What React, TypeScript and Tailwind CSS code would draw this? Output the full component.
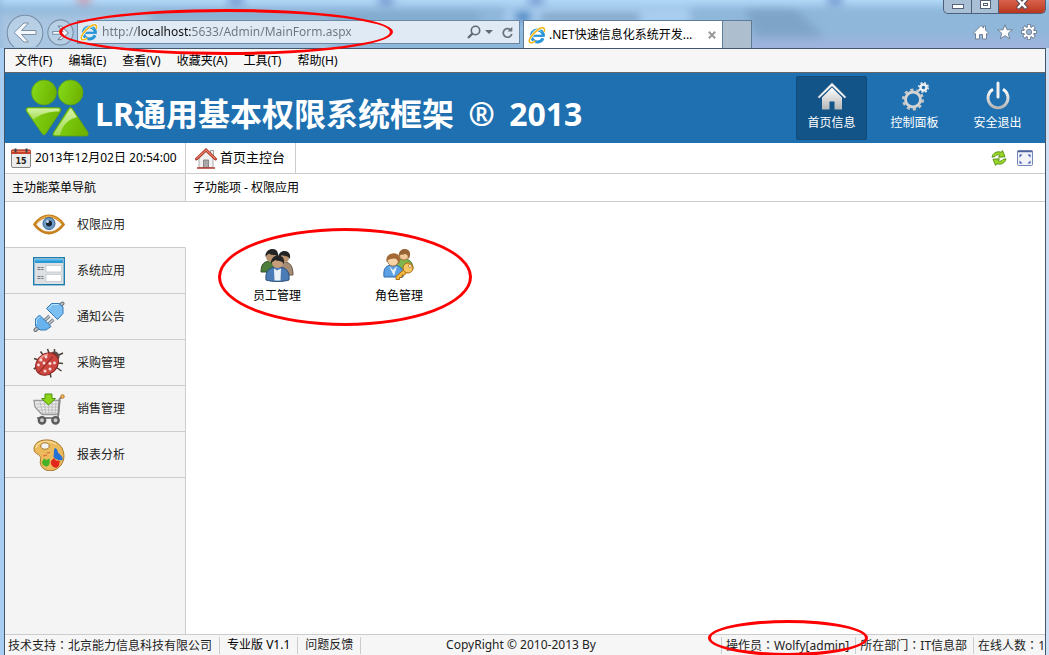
import React, { useState } from "react";

type IconProps = { className?: string };

function IeLogo({ className }: IconProps) {
  return (
    <svg viewBox="0 0 18 18" className={className} aria-hidden="true">
      <path d="M15 12.200A6 6 0 1 1 15.400 9.200" fill="none" stroke="#2795d6" strokeWidth="3" />
      <path d="M5 9.800h11.800" stroke="#2795d6" strokeWidth="2.200" />
      <path d="M4.300 6.500A5.800 5.800 0 0 1 14 6.300" fill="none" stroke="#7fd0f5" strokeWidth="1" />
      <path d="M16.200 5.500C17.500 1.200 14 .5 9.500 4 3.500 8.700-.5 15 2 16.500c1.200.6 3 0 4.800-1.200" fill="none" stroke="#fff" strokeWidth="2.600" />
      <path d="M16.200 5.500C17.500 1.200 14 .5 9.500 4 3.500 8.700-.5 15 2 16.500c1.200.6 3 0 4.800-1.200" fill="none" stroke="#f3b61b" strokeWidth="1.600" strokeLinecap="round" />
    </svg>
  );
}

function BackIcon({ small }: { small?: boolean }) {
  return (
    <svg viewBox="0 0 38 38" className={small ? "h-[27px] w-[27px] rotate-180" : "h-[38px] w-[38px]"} aria-hidden="true">
      <circle cx="19" cy="19" r="17.800" fill="#c4d8eb" fillOpacity="0.55" stroke="#788ea5" strokeWidth={small ? 1.5 : 1.100} />
      <path d="M8 18.500 18 9h4.500l-7 7.500H30v4H15.500l7 7.500H18z" fill="#f4f8fc" stroke="#7d8fa3" strokeWidth={small ? 1.500 : 1} strokeLinejoin="round" />
    </svg>
  );
}

function SearchIcon() {
  return (
    <svg viewBox="0 0 14 14" className="h-[14px] w-[14px]" fill="none" stroke="#5f6973" aria-hidden="true">
      <circle cx="8.500" cy="5.500" r="4.200" strokeWidth="1.600" />
      <path d="M5.400 8.600 1 13" strokeWidth="2.200" />
    </svg>
  );
}

function ReloadIcon() {
  return (
    <svg viewBox="0 0 13 13" className="h-[13px] w-[13px]" aria-hidden="true">
      <path d="M9.300 3.600A4.300 4.300 0 1 0 10.800 7.800" fill="none" stroke="#6a747e" strokeWidth="1.700" />
      <path d="M11.300.8v4.700H6.600z" fill="#6a747e" />
    </svg>
  );
}

function ChromeHome() {
  return (
    <svg viewBox="0 0 16 16" className="h-4 w-4" fill="#fff" stroke="#728296" strokeWidth="1" strokeLinejoin="round" aria-hidden="true">
      <path d="M8 1.500l2.500 2.400V2h2v4L15.500 9l-1 1.200-1-.7v5.500H9.500v-4.500h-3V15h-4V9.500l-1 .7-1-1.200z" />
    </svg>
  );
}

function ChromeStar() {
  return (
    <svg viewBox="0 0 16 16" className="h-4 w-4" fill="#fff" stroke="#728296" strokeWidth="1" strokeLinejoin="round" aria-hidden="true">
      <path d="M8 .8l2 5h5.400l-4.200 3.500 1.600 5.500L8 11.700l-4.800 3.100 1.600-5.500L.6 5.800H6z" />
    </svg>
  );
}

function ChromeGear() {
  return (
    <svg viewBox="0 0 16 16" className="h-4 w-4" aria-hidden="true">
      <g stroke="#728296" strokeWidth="4"><path d="M8 .2v15.600M.2 8h15.600M2.500 2.500l11 11M13.500 2.500l-11 11" /></g>
      <circle cx="8" cy="8" r="5.900" fill="#728296" />
      <g stroke="#fff" strokeWidth="2.200"><path d="M8 1v14M1 8h14M3.100 3.100l9.800 9.800M12.900 3.100l-9.800 9.800" /></g>
      <circle cx="8" cy="8" r="3.700" fill="#9cb4d0" stroke="#fff" strokeWidth="2.200" />
      <circle cx="8" cy="8" r="2.700" fill="#9cb4d0" stroke="#728296" strokeWidth="0.900" />
    </svg>
  );
}

function BrandLogo() {
  return (
    <svg viewBox="0 0 64 58" className="h-[58px] w-16 shrink-0" aria-hidden="true">
      <defs>
        <linearGradient id="leaf" x1="0" y1="0" x2="1" y2="0.3">
          <stop offset="0" stopColor="#86dc1c" />
          <stop offset="1" stopColor="#6fb400" />
        </linearGradient>
        <linearGradient id="shine" x1="0" y1="0" x2="0" y2="1">
          <stop offset="0" stopColor="#d5f2a5" />
          <stop offset="1" stopColor="#a5dc55" />
        </linearGradient>
      </defs>
      <circle cx="19" cy="13.500" r="12.500" fill="url(#leaf)" stroke="#5f9e14" strokeWidth="0.800" />
      <circle cx="45.500" cy="13.500" r="12.500" fill="url(#leaf)" stroke="#5f9e14" strokeWidth="0.800" />
      <path d="M3 28.500h31q3 .5 1.500 4L21 54.500q-2 3-4 0L1.500 32.500q-1.500-3.500 1.500-4z" fill="url(#leaf)" stroke="#5f9e14" strokeWidth="0.800" />
      <path d="M3.500 29.500h30q2 .5.5 3C24 32.500 15 35 8.500 40.500L2.500 32q-.8-2 1-2.500z" fill="url(#shine)" />
      <path d="M43.500 29.500q1.900-2.400 3.800 0L63 53.500q1 3.500-2 3.500H30q-3 0-1.800-3z" fill="url(#leaf)" stroke="#5f9e14" strokeWidth="0.800" />
      <path d="M45.400 29.500q1 0 2 1.700l4.600 7C44 40 37.500 45 35 56h-5q-1.700-.3-.9-2z" fill="url(#shine)" />
    </svg>
  );
}

function SilverDefs() {
  return (
    <svg className="absolute h-0 w-0" aria-hidden="true">
      <defs>
        <linearGradient id="silver" x1="0" y1="0" x2="0" y2="1">
          <stop offset="0" stopColor="#ffffff" />
          <stop offset="1" stopColor="#b5b5b5" />
        </linearGradient>
      </defs>
    </svg>
  );
}

function BigHome() {
  return (
    <svg viewBox="0 0 32 32" className="h-8 w-8" aria-hidden="true">
      <path d="M16 6.500 26 16.500v12h-7.500v-8h-5v8H6v-12z" fill="url(#silver)" />
      <path d="M16 1.500 30.500 16l-1.700 1.500L16 5.500 3.200 17.500 1.500 16z" fill="#f4f4f4" stroke="#164a76" strokeWidth="0.600" />
    </svg>
  );
}

function BigGears() {
  return (
    <svg viewBox="0 0 32 32" className="h-8 w-8" aria-hidden="true">
      <g fill="none">
        <circle cx="14" cy="18.500" r="7.500" strokeWidth="2.800" stroke="#d4d4d4" />
        <circle cx="14" cy="18.500" r="9.700" strokeWidth="2.600" strokeDasharray="3.100 2.995" stroke="#c8c8c8" />
        <circle cx="24.500" cy="6.500" r="3" strokeWidth="2.400" stroke="#f0f0f0" />
        <circle cx="24.500" cy="6.500" r="4.700" strokeWidth="1.800" strokeDasharray="1.850 1.850" stroke="#e8e8e8" />
      </g>
    </svg>
  );
}

function BigPower() {
  return (
    <svg viewBox="0 0 32 32" className="h-8 w-8" fill="none" aria-hidden="true">
      <path d="M11 8.200a10 10 0 1 0 10 0" stroke="url(#silver)" strokeWidth="2.900" />
      <path d="M16 2v14" stroke="#f0f0f0" strokeWidth="3" strokeLinecap="round" />
    </svg>
  );
}

function CalendarIcon() {
  return (
    <svg viewBox="0 0 20 20" className="h-5 w-5" aria-hidden="true">
      <rect x="0.500" y="2" width="19" height="17.500" rx="1.500" fill="#ececec" stroke="#858585" />
      <path d="M0 6V3q0-1.500 1.500-1.500h17Q20 1.500 20 3v3z" fill="#c9422c" />
      <path d="M1 3.500h18" stroke="#e8826c" />
      <path d="M4.500.5v4M15.500.5v4" stroke="#444" strokeWidth="2" />
      <text x="10" y="15.500" textAnchor="middle" fontFamily="DejaVu Sans" fontWeight="bold" fontSize="8" fill="#222">15</text>
    </svg>
  );
}

function HouseIcon() {
  return (
    <svg viewBox="0 0 22 21" className="h-[21px] w-[22px]" aria-hidden="true">
      <path d="M15.500 2.500h3V8h-3z" fill="#eee" stroke="#888" strokeWidth="0.800" />
      <path d="M4 10 11 3.500 18 10v9.500H4z" fill="#f0f0f0" stroke="#999" strokeWidth="0.800" />
      <path d="M8.500 12h5v7.500h-5z" fill="#a8a8a8" stroke="#777" strokeWidth="0.800" />
      <path d="M2 20h18" stroke="#b33a2c" strokeWidth="1.500" />
      <path d="M1.500 11 11 2l9.500 9" fill="none" stroke="#a92b1c" strokeWidth="2.800" strokeLinecap="round" />
      <path d="M1.700 10.700 11 2l9.300 8.700" fill="none" stroke="#f08a72" strokeWidth="1.100" strokeLinecap="round" />
    </svg>
  );
}

function RefreshIcon() {
  return (
    <svg viewBox="0 0 16 16" className="h-4 w-4" fill="#9bd529" stroke="#4d8a0c" strokeWidth="0.900" strokeLinejoin="round" aria-hidden="true">
      <path d="M1 7.200C1.800 3 6 .8 10.200 2.300L11.500.6 14 6.800 7.600 7.200 8.900 5.200C6.600 4.300 5 5 4 6.500z" />
      <path d="M15 8.800C14.200 13 10 15.200 5.800 13.700L4.500 15.400 2 9.200 8.400 8.800 7.100 10.800C9.400 11.700 11 11 12 9.500z" />
    </svg>
  );
}

function FullscreenIcon() {
  return (
    <svg viewBox="0 0 16 16" className="h-4 w-4" aria-hidden="true">
      <rect x="0.500" y="0.500" width="15" height="15" rx="1" fill="#f1f3f8" stroke="#7388b8" />
      <path d="M.5 1.500h15" stroke="#50609c" strokeWidth="1.500" />
      <g fill="#3b50b8"><path d="M2.500 4.500h3l-3 3zM13.500 4.500v3l-3-3zM2.500 13.500v-3l3 3zM13.500 13.500h-3l3-3z" /></g>
    </svg>
  );
}

function EyeIcon() {
  return (
    <svg viewBox="0 0 32 32" className="h-8 w-8" aria-hidden="true">
      <path d="M3 17Q16 30 29 17" fill="none" stroke="#aaa" strokeOpacity="0.500" strokeWidth="3" />
      <path d="M1.500 15.500Q8 7 16 7t14.500 8.500Q24 24 16 24T1.500 15.500z" fill="#f4f5f7" stroke="#c8811c" strokeWidth="2.800" strokeLinejoin="round" />
      <path d="M3.500 14Q9.500 7.200 16 7.200T28.500 14" fill="none" stroke="#f0b85a" strokeWidth="0.900" />
      <circle cx="16" cy="14.500" r="6" fill="#6d9bc6" stroke="#3a6590" />
      <circle cx="16" cy="14.500" r="3" fill="#18222e" />
      <circle cx="14.500" cy="12.500" r="1.500" fill="#c5d8e8" />
    </svg>
  );
}

function FormIcon() {
  return (
    <svg viewBox="0 0 32 32" className="h-8 w-8" aria-hidden="true">
      <rect x="0.700" y="2.700" width="30.600" height="27" fill="#dce0e3" stroke="#1d7cb0" strokeWidth="1.400" />
      <path d="M2 4h28v4H2z" fill="#2b9bd8" />
      <path d="M2 4h28v1.500H2z" fill="#5fc0ef" />
      <path d="M13 10.500h15.500v6.500H13zM13 19.500h15.500v7H13z" fill="#fff" stroke="#bcc2c6" strokeWidth="0.700" />
      <g stroke="#777" strokeDasharray="3 .8"><path d="M4.500 12.500h6M4.500 14.500h6M4.500 21.500h6M4.500 23.500h6" /></g>
    </svg>
  );
}

function PlugIcon() {
  return (
    <svg viewBox="0 0 32 32" className="h-8 w-8" strokeLinejoin="round" aria-hidden="true">
      <path d="M2.500 29 6.500 25M29.500 2.500l-3.500 3" stroke="#6b7277" strokeWidth="4" strokeLinecap="round" />
      <path d="M2.500 29 6.500 25M29.500 2.500l-3.500 3" stroke="#b9c0c5" strokeWidth="2" strokeLinecap="round" />
      <path d="M11 20l5.500-5M15 23.500l5.500-5" stroke="#777e84" strokeWidth="3.200" />
      <path d="M11 20l5.500-5M15 23.500l5.500-5" stroke="#c6cbd0" strokeWidth="1.200" />
      <path d="M13.500 7.500 18.500 2.500h7.500l4 3.500v6.500L24.500 18.500z" fill="#7cbff3" stroke="#3779b5" />
      <path d="M6.500 14 18 25.500 13 29H7L2.500 25v-7z" fill="#68b3ee" stroke="#3779b5" />
      <path d="M15.500 7.500 19.500 3.500h6M7 15.500l-3.500 3.500v4" fill="none" stroke="#bfe2fb" />
    </svg>
  );
}

function BugIcon() {
  return (
    <svg viewBox="0 0 32 32" className="h-8 w-8" aria-hidden="true">
      <g fill="none" stroke="#4c4038" strokeWidth="1.500">
        <path d="M10 8 7.500 4.500M5.500 13 1 11.500M4 20 .8 22M16 6 14.500 2M25 16l5 .5M23.500 20.500l5 3.500M17 26l1 4.500M21.500 7V2M25 8.500l5-2.500" />
      </g>
      <circle cx="21.500" cy="9.500" r="5" fill="#5a4d46" />
      <ellipse cx="14" cy="17" rx="12.500" ry="10" fill="#cc4640" stroke="#8e2420" transform="rotate(-42 14 17)" />
      <path d="M20 9.500 6 25" stroke="#7d1f1b" />
      <path d="M6 14q3-6 9-6.500" fill="none" stroke="#ee928c" strokeWidth="2" />
      <g fill="#f7dcda">
        <circle cx="8" cy="13" r="1.500" /><circle cx="13" cy="10" r="1.400" /><circle cx="11" cy="16" r="1.500" />
        <circle cx="5.500" cy="18" r="1.400" /><circle cx="17" cy="16.500" r="1.500" /><circle cx="21.500" cy="16" r="1.400" />
        <circle cx="12" cy="24" r="1.500" /><circle cx="17" cy="22" r="1.500" />
      </g>
    </svg>
  );
}

function CartIcon() {
  return (
    <svg viewBox="0 0 32 32" className="h-8 w-8" aria-hidden="true">
      <path d="M1 7.500h26L25.500 21.500H9L2 14z" fill="#ececec" stroke="#999" strokeWidth="1.300" />
      <g stroke="#b9b9b9" strokeWidth="0.900"><path d="M3 11h23M3.500 14h22.500M6 17h19.500M8 20h17M7 9l3 12M11 9l2 12M15 9l1 12M19 9v12M23 9l-1 12" /></g>
      <path d="M29.500 3.500 26.500 6 25 25H4" fill="none" stroke="#858585" strokeWidth="1.800" />
      <circle cx="29.500" cy="3.500" r="1.800" fill="#f4b04c" stroke="#a36a1a" strokeWidth="0.800" />
      <g fill="#ccc" stroke="#5c5c5c" strokeWidth="2.400"><circle cx="9" cy="27.300" r="3.200" /><circle cx="22.500" cy="27.300" r="3.200" /></g>
      <path d="M12 1h7v4.500h3.500L15.500 12 8.500 5.500H12z" fill="#8ed419" stroke="#4d9410" />
    </svg>
  );
}

function PaletteIcon() {
  return (
    <svg viewBox="0 0 32 32" className="h-8 w-8" aria-hidden="true">
      <path d="M5 3C12-1 24 .5 29 9c5 10 0 20-9 22.500C11 33 6 27 7.500 21c.8-4-1.500-5-4-6.500C-.5 12 .5 6 5 3z" fill="#eaba5c" stroke="#a8772a" />
      <path d="M3 9C4 3 14 0 23 5" fill="none" stroke="#f8dea0" strokeWidth="1.400" />
      <ellipse cx="12" cy="7" rx="4.200" ry="3.200" fill="#f3f3f3" stroke="#a8772a" />
      <path d="M22 9c3 1 2 3 3.500 5 2 2.500 4.500 3 4 7-3 1-9-1-9-4 1-3-.5-5 1.500-8z" fill="#2371d5" />
      <path d="M9 23l2-3.500 2.500 1.500 3-1.500c0 3 1 5-1.500 7.500-3 1.500-6-1-6-4z" fill="#45b129" />
      <path d="M18 22l3-3 2 2.500 4 .500c-1 2 0 5-3 6.500-3 1-7-2.500-6-6.500z" fill="#e2271c" />
      <path d="M10 17l4-1M14 14l3-.500" stroke="#dc5d2b" />
    </svg>
  );
}

function StaffIcon() {
  return (
    <svg viewBox="0 0 34 34" className="h-[34px] w-[34px]" aria-hidden="true">
      <path d="M1 24c0-8 3-11 10-11s8 4 8 11z" fill="#4c7d3a" stroke="#33542a" />
      <circle cx="11.500" cy="8.500" r="5.500" fill="#b99270" />
      <path d="M5.500 9C4.500 0 17-1.500 18 5.500c.5 2 0 4-.5 4-1-4-5-1-8.500-4-1 1-2 1-3.500 3.500z" fill="#222426" />
      <path d="M15 27c0-9 3-13 9-13s9 4 9 13z" fill="#a58c74" stroke="#6a5746" />
      <circle cx="24" cy="10" r="5" fill="#b99270" />
      <path d="M18.500 10c-1-8 10-9.500 11.500-3 .3 2 0 3-.5 4-1-4-5-2-7.500-4-1 1-2 1.500-3.500 3z" fill="#222426" />
      <path d="M6 32c-1-9 3-13 11.500-13S30 23 29 32c-6 2-17 2-23 0z" fill="#4c7cb5" stroke="#2c4e7c" />
      <path d="M14 20.500l3 2 4-2-.5 12h-6z" fill="#eef2f7" />
      <circle cx="17.500" cy="14.500" r="5.500" fill="#c79e7a" />
      <path d="M11 16C10 6 23 5 24 12c.3 2 0 4-.5 4-1-4-5-2-8-4-1 1-3 1-4.500 4z" fill="#222426" />
    </svg>
  );
}

function RoleIcon() {
  return (
    <svg viewBox="0 0 34 34" className="h-[34px] w-[34px]" aria-hidden="true">
      <path d="M14 21c0-8 3-10 8-10s9 3 9 10z" fill="#7eb64b" stroke="#467b25" />
      <circle cx="22" cy="7.500" r="4.500" fill="#f1c99a" stroke="#9a6534" strokeWidth="0.800" />
      <path d="M17 8c-1.500-8 10-9.500 11-3 .3 3-.5 5-1.500 6-.5-3-1-5-4-5-1 1-4 0-5.500 2z" fill="#986335" />
      <path d="M2 29c-1-9 2-12 9-12s11 4 10 12z" fill="#5ba0e2" stroke="#2c69b0" />
      <path d="M7 18l4 4 4-4-3 10z" fill="#e7f2fc" />
      <circle cx="11" cy="12.500" r="5.500" fill="#f7d3a8" stroke="#9a6534" strokeWidth="0.800" />
      <path d="M4.500 14C2.500 4 17 2.500 18 10c.3 3-.5 5-1.500 6-.5-4-2-5.500-5-5.500-2 1-5 0-7 3.500z" fill="#a46a36" />
      <path d="M22.500 21 14 28.500v3h3.500v-2H20v-2.500h2.500l2.500-3" fill="#f5b83f" stroke="#a86c15" />
      <circle cx="26" cy="20" r="5" fill="#f8c765" stroke="#a86c15" />
      <circle cx="28" cy="18" r="1.500" fill="#fff" stroke="#a86c15" strokeWidth="0.700" />
    </svg>
  );
}

// Blurred shapes seen through the glass title bar
function GlassBackdrop() {
  return (
    <svg className="absolute inset-0 h-full w-full" preserveAspectRatio="none" viewBox="0 0 1049 48" aria-hidden="true">
      <defs><filter id="soft" x="-20%" y="-50%" width="140%" height="200%"><feGaussianBlur stdDeviation="4" /></filter></defs>
      <g filter="url(#soft)">
        <path d="M0-8h1049v13H0z" fill="#b6dbfa" />
        <path d="M0 14h330v44H0z" fill="#b3cbe4" fillOpacity="0.700" />
        <path d="M150 12h330v10H150z" fill="#749fc5" fillOpacity="0.600" />
        <path d="M505 8h185v18H505z" fill="#a9cef0" />
        <path d="M515 12h16v10h-16z" fill="#347fc0" />
        <path d="M540 15h100v5H540z" fill="#56789b" />
        <path d="M745 8h50l40 40h-75z" fill="#7399bd" fillOpacity="0.600" />
        <path d="M730 38h319v20H730z" fill="#9fb4de" />
        <path d="M77-3h14v6H77z" fill="#d77b83" />
        <path d="M228-3h16v6h-16zM378-3h16v6h-16zM528-3h16v6h-16zM827-3h16v6h-16z" fill="#4570c4" />
      </g>
    </svg>
  );
}

// Full-width colon, centred in its cell
function Colon() {
  return <span className="font-['Noto_Sans_CJK_TC',sans-serif]">：</span>;
}

const menus = ["文件(F)", "编辑(E)", "查看(V)", "收藏夹(A)", "工具(T)", "帮助(H)"];

const topNav = [
  { label: "首页信息", Icon: BigHome },
  { label: "控制面板", Icon: BigGears },
  { label: "安全退出", Icon: BigPower },
];

const sideNav = [
  { label: "权限应用", Icon: EyeIcon },
  { label: "系统应用", Icon: FormIcon },
  { label: "通知公告", Icon: PlugIcon },
  { label: "采购管理", Icon: BugIcon },
  { label: "销售管理", Icon: CartIcon },
  { label: "报表分析", Icon: PaletteIcon },
];

const apps = [
  { label: "员工管理", Icon: StaffIcon },
  { label: "角色管理", Icon: RoleIcon },
];

function BrowserBar() {
  const [url, setUrl] = useState("http://localhost:5633/Admin/MainForm.aspx");
  return (
    <div className="relative z-10 h-12 bg-[#8fb7da]">
      <GlassBackdrop />
      <div className="relative flex h-[14px] justify-end pr-[3px]">
        <div className="flex overflow-hidden rounded-b-[5px] border border-t-0 border-[#4c6079] bg-[#a8bfd6]">
          <button aria-label="最小化" className="flex w-7 items-start justify-center border-r border-[#4c6079] pt-1">
            <span className="h-[5px] w-3 border border-[#55617a] bg-white" />
          </button>
          <button aria-label="最大化" className="flex w-[27px] items-start justify-center border-r border-[#4c6079]">
            <span className="flex h-[9px] w-[11px] items-center justify-center border border-[#55617a] bg-white">
              <span className="h-[3px] w-[5px] border border-[#55617a]" />
            </span>
          </button>
          <button aria-label="关闭" className="flex w-[46px] items-start justify-center bg-gradient-to-b from-[#d9624c] to-[#b8351c]">
            <svg viewBox="0 0 12 10" className="h-[10px] w-3" aria-hidden="true">
              <path d="M1.500-1 10.500 8.500M10.500-1 1.500 8.500" stroke="#5b4a58" strokeWidth="4.500" />
              <path d="M2-.5 10 8M10-.5 2 8" stroke="#fff" strokeWidth="2.500" />
            </svg>
          </button>
        </div>
      </div>
      <div className="relative flex h-[34px] pl-[6px]">
        <button aria-label="后退" className="flex h-[33px] shrink-0 items-start overflow-hidden"><BackIcon /></button>
        <button aria-label="前进" className="ml-[3px] mt-[5px] h-[27px] shrink-0"><BackIcon small /></button>
        <div className="relative ml-[3px] mt-[6px] flex h-6 flex-1 items-center gap-1 border border-[#6b88a5] bg-[#dfeaf5] pl-[2px] pr-[3px]">
          <IeLogo className="h-[18px] w-[18px] shrink-0" />
          <input
            aria-label="地址"
            value={url}
            onChange={(e) => setUrl(e.target.value)}
            className="min-w-0 flex-1 bg-[linear-gradient(90deg,#6d757e_36px,#111_36px,#111_90px,#6d757e_90px)] bg-clip-text text-xs text-transparent caret-black outline-none"
          />
          <button aria-label="搜索"><SearchIcon /></button>
          <button aria-label="展开地址" className="border-x-4 border-t-4 border-x-transparent border-t-[#5f6973]" />
          <button aria-label="刷新" className="ml-1 mr-[2px]"><ReloadIcon /></button>
          <span className="pointer-events-none absolute -left-[19px] -top-[12px] h-[46px] w-[334px] rounded-[50%] border-3 border-[#f00]" />
        </div>
        <div className="ml-[3px] mt-[6px] flex w-[526px] shrink-0">
          <div className="flex h-7 w-[200px] items-center gap-[3px] border-x border-t border-[#5f7d99] bg-white pl-1 pr-[6px]">
            <IeLogo className="h-[18px] w-[18px] shrink-0" />
            <span className="flex-1 whitespace-nowrap text-xs">.NET快速信息化系统开发...</span>
            <button aria-label="关闭标签页">
              <svg viewBox="0 0 8 8" className="h-2 w-2" aria-hidden="true"><path d="M.8.8l6.400 6.400M7.200.8.8 7.200" stroke="#999" strokeWidth="2" /></svg>
            </button>
          </div>
          <button aria-label="新建标签页" className="h-7 w-[29px] border-r border-t border-[#5f7d99] bg-[#adbfcf]" />
          <div className="ml-auto flex items-start gap-2 pr-3 pt-1">
            <button aria-label="主页"><ChromeHome /></button>
            <button aria-label="收藏"><ChromeStar /></button>
            <button aria-label="工具"><ChromeGear /></button>
          </div>
        </div>
      </div>
    </div>
  );
}

export default function App() {
  const [active, setActive] = useState(0);
  const [top, setTop] = useState(0);

  return (
    <div className="flex min-h-screen flex-col overflow-hidden bg-gradient-to-r from-[#a9cdf0] to-[#cfe2f5] font-['Noto_Sans','Noto_Sans_CJK_SC',sans-serif] text-xs text-black">
      <SilverDefs />
      <BrowserBar />
      <div className="ml-1 mr-[3px] flex flex-1 flex-col border-x border-t border-[#43566b] bg-white">
        <nav className="flex h-6 items-center gap-4 border-b border-[#666] bg-[#f6f6f6] px-[10px]">
          {menus.map((m) => (
            <button key={m} className="whitespace-nowrap">{m}</button>
          ))}
        </nav>

        <header className="flex h-[70px] items-center justify-between bg-[#1e70b0] pl-5 pr-3 text-white">
          <div className="flex items-center gap-[6px]">
            <BrandLogo />
            <h1 className="whitespace-nowrap pt-3 text-[32px] font-bold leading-10">
              LR通用基本权限系统框架 <span className="mx-[6px]">®</span> 2013
            </h1>
          </div>
          <div className="flex gap-3">
            {topNav.map(({ label, Icon }, i) => (
              <button
                key={label}
                onClick={() => setTop(i)}
                className={`flex h-16 w-[71px] flex-col items-center rounded-[2px] border pt-1 ${top === i ? "border-[#114c7b] bg-[#135488]" : "border-transparent"}`}
              >
                <Icon />
                <span className="leading-5">{label}</span>
              </button>
            ))}
          </div>
        </header>

        <div className="flex h-[31px] border-b border-[#ccc]">
          <div className="flex w-[181px] shrink-0 items-center gap-1 whitespace-nowrap border-r border-[#ccc] pl-[6px]">
            <CalendarIcon />
            <time dateTime="2013-12-02T20:54:00">2013年12月02日 20:54:00</time>
          </div>
          <button className="flex items-center gap-[3px] border-r border-[#ccc] pl-[9px] pr-[10px] text-[13px]">
            <HouseIcon />
            首页主控台
          </button>
          <div className="ml-auto flex items-center gap-[10px] pr-3">
            <button aria-label="刷新页面"><RefreshIcon /></button>
            <button aria-label="全屏"><FullscreenIcon /></button>
          </div>
        </div>

        <div className="flex h-7 items-center border-b border-[#ccc]">
          <h2 className="flex h-full w-[181px] shrink-0 items-center border-r border-[#ccc] bg-[#f4f4f4] pl-[7px]">主功能菜单导航</h2>
          <h2 className="pl-[7px]">子功能项 - {sideNav[active].label}</h2>
        </div>

        <div className="flex flex-1">
          <aside className="flex w-[181px] shrink-0 flex-col">
            {sideNav.map(({ label, Icon }, i) => (
              <button
                key={label}
                onClick={() => setActive(i)}
                className={`flex h-[46px] items-center gap-3 border-b border-r border-b-[#ccc] pl-7 text-[#222] ${active === i ? "border-r-white bg-white" : "border-r-[#ccc] bg-[#f4f4f4]"}`}
              >
                <Icon />
                {label}
              </button>
            ))}
            <div className="flex-1 border-r border-[#ccc] bg-[#f4f4f4]" />
          </aside>
          <main className="flex-1 pl-[30px] pt-[46px]">
            <div className="relative inline-flex">
              {apps.map(({ label, Icon }) => (
                <button key={label} className="flex w-[122px] flex-col items-center gap-1">
                  <Icon />
                  <span className="leading-5">{label}</span>
                </button>
              ))}
              <span className="pointer-events-none absolute left-[2px] -top-[20px] h-[98px] w-[254px] rounded-[50%] border-3 border-[#f00]" />
            </div>
          </main>
        </div>

        <footer className="grid h-[21px] grid-cols-[1fr_auto_1fr] items-center whitespace-nowrap border-t border-[#ccc] bg-[#f6f6f6] text-[#222]">
          <div className="flex leading-4">
            <span className="border-r border-[#ccc] pl-[3px] pr-[7px]">技术支持<Colon />北京能力信息科技有限公司</span>
            <span className="border-r border-[#ccc] px-[7px] text-black">专业版 V1.1</span>
            <a href="#feedback" className="border-r border-[#ccc] px-[7px]">问题反馈</a>
          </div>
          <span className="pr-2">CopyRight © 2010-2013 By</span>
          <div className="flex justify-end leading-4">
            <span className="relative border-l border-[#ccc] pl-1 pr-[6px]">
              操作员<Colon />Wolfy[admin]
              <span className="pointer-events-none absolute -left-[14px] -top-[17px] h-9 w-40 rounded-[50%] border-3 border-[#f00]" />
            </span>
            <span className="border-l border-[#ccc] pl-1 pr-[6px]">所在部门<Colon />IT信息部</span>
            <span className="border-l border-[#ccc] pl-1">在线人数<Colon />1</span>
          </div>
        </footer>
      </div>
    </div>
  );
}
